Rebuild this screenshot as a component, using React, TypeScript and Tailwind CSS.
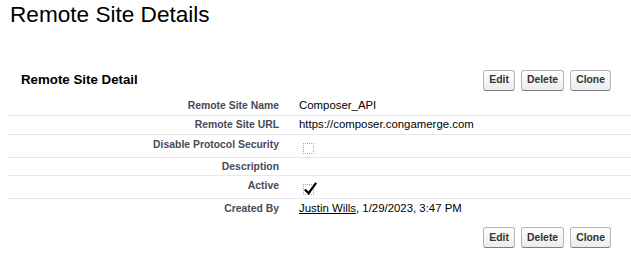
import React from "react";

const font = { fontFamily: '"Liberation Sans", Arial, sans-serif' };

function Btn({ label }: { label: string }) {
  return (
    <button className="h-[21px] rounded-[3px] border border-[#b5b5b5] border-b-[#7f7f7f] bg-gradient-to-b from-white to-[#ececec] px-[5px] text-[10.4px] font-bold text-[#333]">
      {label}
    </button>
  );
}

function Buttons() {
  return (
    <div className="flex gap-[6px]">
      <Btn label="Edit" />
      <Btn label="Delete" />
      <Btn label="Clone" />
    </div>
  );
}

function EmptyBox() {
  return <div className="mt-[6px] ml-[4px] h-[11px] w-[11px] border border-dotted border-[#aaa]" />;
}

function CheckedBox() {
  return (
    <div className="relative mt-[6px] ml-[4px] h-[11px] w-[11px] border border-dotted border-[#aaa]">
      <svg viewBox="0 0 16 16" className="absolute -left-[1px] -top-[4px] h-[15px] w-[15px]">
        <path d="M2 9 L6 13 L14 2" fill="none" stroke="#000" strokeWidth="2.4" strokeLinejoin="miter" />
      </svg>
    </div>
  );
}

type Row = { label: string; value: React.ReactNode; h: string; line: boolean; top?: boolean };

const rows: Row[] = [
  { label: "Remote Site Name", value: "Composer_API", h: "h-[19px]", line: true },
  { label: "Remote Site URL", value: "https://composer.congamerge.com", h: "h-[19px]", line: true },
  { label: "Disable Protocol Security", value: <EmptyBox />, h: "h-[23px]", line: true, top: true },
  { label: "Description", value: "", h: "h-[18px]", line: true },
  { label: "Active", value: <CheckedBox />, h: "h-[23px]", line: true, top: true },
  {
    label: "Created By",
    value: (
      <span>
        <span className="underline">Justin Wills</span>, 1/29/2023, 3:47 PM
      </span>
    ),
    h: "h-[20px]",
    line: false,
  },
];

export default function App() {
  return (
    <div className="h-[266px] w-[631px] overflow-hidden bg-white text-black" style={font}>
      <h1 className="pl-[10px] pt-[1px] text-[22.6px] leading-[28px]">Remote Site Details</h1>

      <div className="mt-[40px] flex h-[22px] items-center justify-between pl-[21px] pr-[20px]">
        <h2 className="text-[13.3px] font-bold">Remote Site Detail</h2>
        <Buttons />
      </div>

      <div className="ml-[8px] mt-[6px]">
        {rows.map((r) => (
          <div
            key={r.label}
            className={`flex ${r.h} ${r.line ? "border-b border-[#e8e8e8]" : ""} ${r.top ? "items-start pt-[2px]" : "items-center"}`}
          >
            <div className="w-[271px] text-right text-[10.4px] font-bold text-[#4a4a56]">{r.label}</div>
            <div className="pl-[20px] text-[11.4px]">{r.value}</div>
          </div>
        ))}
      </div>

      <div className="mt-[8px] flex justify-end pr-[20px]">
        <Buttons />
      </div>
    </div>
  );
}
